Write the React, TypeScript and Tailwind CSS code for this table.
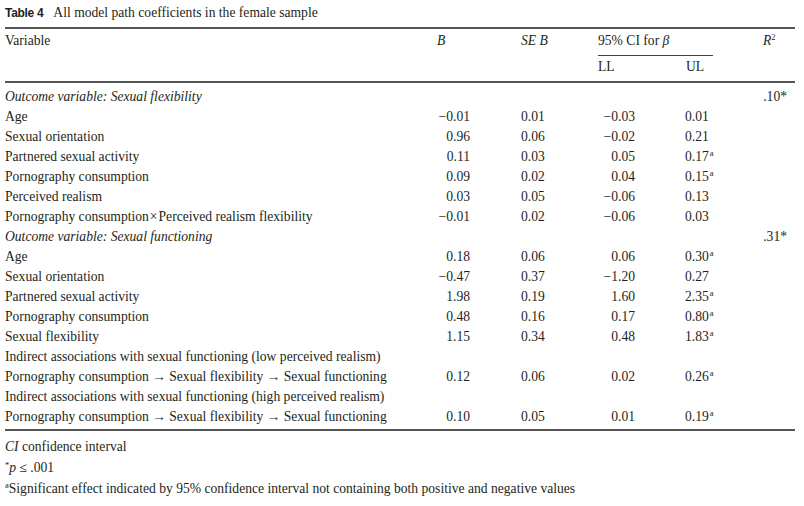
import React from "react";

type Row = {
  label: React.ReactNode;
  italic?: boolean;
  b?: string;
  se?: string;
  ll?: string;
  ul?: string;
  sup?: boolean;
  r2?: string;
};

const A = () => <span className="relative -top-[5px] text-[8.5px] leading-none ml-[1px]">a</span>;

const rows: Row[] = [
  { label: "Outcome variable: Sexual flexibility", italic: true, r2: ".10*" },
  { label: "Age", b: "−0.01", se: "0.01", ll: "−0.03", ul: "0.01" },
  { label: "Sexual orientation", b: "0.96", se: "0.06", ll: "−0.02", ul: "0.21" },
  { label: "Partnered sexual activity", b: "0.11", se: "0.03", ll: "0.05", ul: "0.17", sup: true },
  { label: "Pornography consumption", b: "0.09", se: "0.02", ll: "0.04", ul: "0.15", sup: true },
  { label: "Perceived realism", b: "0.03", se: "0.05", ll: "−0.06", ul: "0.13" },
  {
    label: (
      <>
        Pornography consumption<span className="mx-[1px]">×</span>Perceived realism flexibility
      </>
    ),
    b: "−0.01",
    se: "0.02",
    ll: "−0.06",
    ul: "0.03",
  },
  { label: "Outcome variable: Sexual functioning", italic: true, r2: ".31*" },
  { label: "Age", b: "0.18", se: "0.06", ll: "0.06", ul: "0.30", sup: true },
  { label: "Sexual orientation", b: "−0.47", se: "0.37", ll: "−1.20", ul: "0.27" },
  { label: "Partnered sexual activity", b: "1.98", se: "0.19", ll: "1.60", ul: "2.35", sup: true },
  { label: "Pornography consumption", b: "0.48", se: "0.16", ll: "0.17", ul: "0.80", sup: true },
  { label: "Sexual flexibility", b: "1.15", se: "0.34", ll: "0.48", ul: "1.83", sup: true },
  { label: "Indirect associations with sexual functioning (low perceived realism)" },
  {
    label: "Pornography consumption → Sexual flexibility → Sexual functioning",
    b: "0.12",
    se: "0.06",
    ll: "0.02",
    ul: "0.26",
    sup: true,
  },
  { label: "Indirect associations with sexual functioning (high perceived realism)" },
  {
    label: "Pornography consumption → Sexual flexibility → Sexual functioning",
    b: "0.10",
    se: "0.05",
    ll: "0.01",
    ul: "0.19",
    sup: true,
  },
];

export default function App() {
  return (
    <div
      className="w-[804px] h-[506px] bg-white text-[#231f20] text-[13.6px] leading-[20px] pl-[5px] pr-[9px]"
      style={{ fontFamily: '"Liberation Serif", "Times New Roman", serif' }}
    >
      {/* Title */}
      <div className="h-[26px] flex items-center">
        <span
          className="font-bold text-[12px] tracking-[-0.3px] mr-[10px]"
          style={{ fontFamily: '"Liberation Sans", Arial, sans-serif' }}
        >
          Table 4
        </span>
        <span>All model path coefficients in the female sample</span>
      </div>
      <div className="h-[2px] bg-[#555] mt-[1px]" />

      {/* Header */}
      <div className="flex h-[22px] items-end">
        <div className="w-[432px]">Variable</div>
        <div className="w-[84px] italic">B</div>
        <div className="w-[77px] italic">SE B</div>
        <div className="w-[165px]">
          95% CI for <span className="italic">β</span>
        </div>
        <div className="italic">
          R<span className="not-italic relative -top-[5px] text-[8.5px] leading-none">2</span>
        </div>
      </div>
      <div className="flex h-[5px] items-end">
        <div className="w-[593px]" />
        <div className="w-[115px] h-[1px] bg-[#444]" />
      </div>
      <div className="flex h-[22px] items-center">
        <div className="w-[593px]" />
        <div className="w-[88px]">LL</div>
        <div>UL</div>
      </div>
      <div className="h-[2px] bg-[#555] mt-[3px]" />

      {/* Body */}
      <div className="pt-[4px] pb-[2px]">
        {rows.map((r, i) => (
          <div key={i} className="flex h-[20px] items-center whitespace-nowrap">
            <div className={`w-[405px] ${r.italic ? "italic" : ""}`}>{r.label}</div>
            <div className="w-[60px] text-right">{r.b}</div>
            <div className="w-[100px] pl-[51px]">{r.se}</div>
            <div className="w-[65px] text-right">{r.ll}</div>
            <div className="w-[80px] pl-[50px]">
              {r.ul}
              {r.sup && <A />}
            </div>
            <div className="w-[72px] text-right">{r.r2}</div>
          </div>
        ))}
      </div>
      <div className="h-[2px] bg-[#555]" />

      {/* Footnotes */}
      <div className="pt-[5px] leading-[21px]">
        <div className="h-[21px]">
          <span className="italic">CI</span> confidence interval
        </div>
        <div className="h-[21px]">
          <span className="relative -top-[4px] text-[8.5px] leading-none">*</span>
          <span className="italic">p</span> ≤ .001
        </div>
        <div className="h-[21px]">
          <span className="relative -top-[5px] text-[8.5px] leading-none">a</span>Significant effect indicated by 95%
          confidence interval not containing both positive and negative values
        </div>
      </div>
    </div>
  );
}
